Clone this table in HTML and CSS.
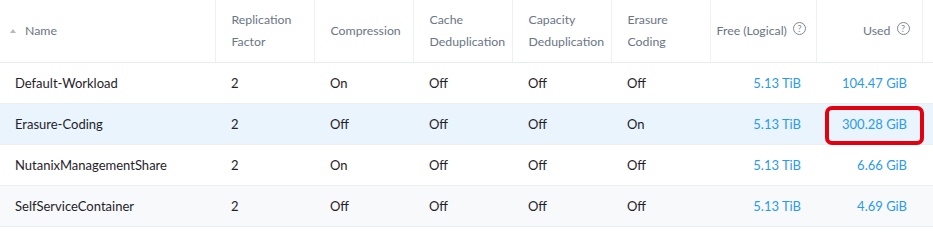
FILE: index.html
```html
<!DOCTYPE html>
<html>
<head>
<meta charset="utf-8">
<link rel="stylesheet" href="styles.css">
</head>
<body>
<table class="grid">
  <colgroup>
    <col class="c-name"><col class="c-std"><col class="c-std"><col class="c-std"><col class="c-std"><col class="c-std"><col class="c-num"><col class="c-num"><col class="c-gut">
  </colgroup>
  <thead>
    <tr>
      <th class="h-name"><span class="sort"></span>Name</th>
      <th>Replication<br>Factor</th>
      <th>Compression</th>
      <th>Cache<br>Deduplication</th>
      <th>Capacity<br>Deduplication</th>
      <th>Erasure<br>Coding</th>
      <th class="h-free">Free (Logical)<span class="help">?</span></th>
      <th class="h-used">Used<span class="help">?</span></th>
      <th class="gut"></th>
    </tr>
  </thead>
  <tbody>
    <tr>
      <td class="name">Default-Workload</td><td>2</td><td>On</td><td>Off</td><td>Off</td><td>Off</td>
      <td class="num">5.13 TiB</td><td class="num">104.47 GiB</td><td></td>
    </tr>
    <tr class="selected">
      <td class="name">Erasure-Coding</td><td>2</td><td>Off</td><td>Off</td><td>Off</td><td>On</td>
      <td class="num">5.13 TiB</td><td class="num used-hl"><span class="mark">300.28 GiB</span></td><td></td>
    </tr>
    <tr>
      <td class="name">NutanixManagementShare</td><td>2</td><td>On</td><td>Off</td><td>Off</td><td>Off</td>
      <td class="num">5.13 TiB</td><td class="num">6.66 GiB</td><td></td>
    </tr>
    <tr class="alt">
      <td class="name">SelfServiceContainer</td><td>2</td><td>Off</td><td>Off</td><td>Off</td><td>Off</td>
      <td class="num">5.13 TiB</td><td class="num">4.69 GiB</td><td></td>
    </tr>
  </tbody>
</table>
</body>
</html>
```

FILE: styles.css
```css
html, body {
  margin: 0;
  padding: 0;
  background: #ffffff;
}
body {
  font-family: Lato, "Open Sans", sans-serif;
  font-size: 13px;
  color: #1f2329;
}
.grid {
  width: 933px;
  border-collapse: collapse;
  table-layout: fixed;
}
.c-name { width: 215px; }
.c-std { width: 99px; }
.c-num { width: 106px; }
.c-gut { width: 11px; }

thead th {
  height: 62px;
  padding: 0 16px;
  text-align: left;
  font-weight: 400;
  font-size: 12.3px;
  color: #6a7585;
  line-height: 22px;
  border-left: 1px solid #eef0f2;
  border-bottom: 1px solid #e9ecef;
  vertical-align: middle;
  white-space: nowrap;
}
thead th.h-name {
  border-left: none;
  padding-left: 10px;
}
thead th.gut {
  padding: 0;
}
.sort {
  display: inline-block;
  width: 0;
  height: 0;
  border-left: 3px solid transparent;
  border-right: 3px solid transparent;
  border-bottom: 4px solid #b4bac3;
  margin-right: 9px;
  vertical-align: 2px;
}
.h-free { padding-left: 6px; }
.h-used { text-align: right; padding-right: 12px; }
.help {
  display: inline-block;
  width: 11px;
  height: 11px;
  border: 1px solid #7f8894;
  border-radius: 50%;
  font-size: 9px;
  line-height: 11px;
  text-align: center;
  color: #7f8894;
  margin-left: 6px;
  vertical-align: 3px;
}

tbody td {
  height: 40px;
  padding: 0 16px;
  border-bottom: 1px solid #eceef1;
  white-space: nowrap;
}
tbody td.name { padding-left: 15px; }
tbody td.num {
  text-align: right;
  color: #2a9af0;
  padding-right: 15px;
}
tbody tr.selected td { background: #e9f4fd; }
tbody tr.alt td { background: #f8f9fa; }
.used-hl { position: relative; }
.mark::before {
  content: "";
  position: absolute;
  left: 9px;
  right: -2px;
  top: 2px;
  bottom: -1px;
  border: 4px solid #e3000f;
  border-radius: 7px;
}
```
